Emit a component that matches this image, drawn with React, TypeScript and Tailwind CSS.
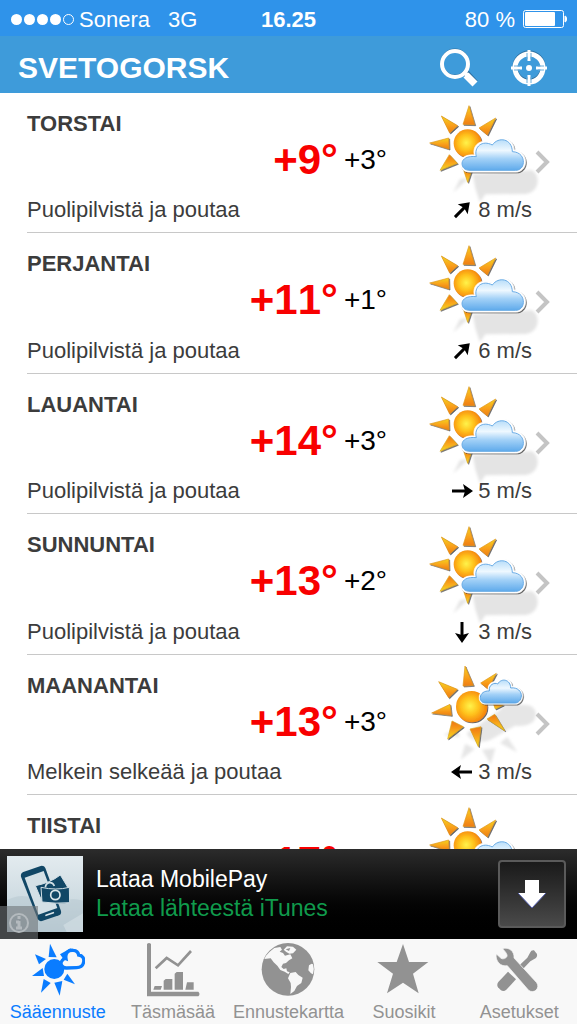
import { useState } from "react"
import type { ReactNode } from "react"

type Sky = "partly" | "mostlyClear"

const forecast = [
  { day: "TORSTAI", high: "+9°", low: "+3°", text: "Puolipilvistä ja poutaa", wind: 8, angle: -45, sky: "partly" as Sky },
  { day: "PERJANTAI", high: "+11°", low: "+1°", text: "Puolipilvistä ja poutaa", wind: 6, angle: -45, sky: "partly" as Sky },
  { day: "LAUANTAI", high: "+14°", low: "+3°", text: "Puolipilvistä ja poutaa", wind: 5, angle: 0, sky: "partly" as Sky },
  { day: "SUNNUNTAI", high: "+13°", low: "+2°", text: "Puolipilvistä ja poutaa", wind: 3, angle: 90, sky: "partly" as Sky },
  { day: "MAANANTAI", high: "+13°", low: "+3°", text: "Melkein selkeää ja poutaa", wind: 3, angle: 180, sky: "mostlyClear" as Sky },
  { day: "TIISTAI", high: "+17°", low: "+4°", text: "Puolipilvistä ja poutaa", wind: 3, angle: 0, sky: "partly" as Sky },
]

// Gradients shared by all weather drawings
function WeatherDefs() {
  return (
    <svg className="absolute h-0 w-0" aria-hidden="true">
      <defs>
        <radialGradient id="sun" cx="45%" cy="48%" r="55%">
          <stop offset="0%" stopColor="#fff34a" />
          <stop offset="50%" stopColor="#ffc21c" />
          <stop offset="100%" stopColor="#f5820c" />
        </radialGradient>
        <linearGradient id="ray" x1="0" y1="0" x2="0" y2="1">
          <stop offset="0%" stopColor="#f4d420" />
          <stop offset="55%" stopColor="#f9a01b" />
          <stop offset="100%" stopColor="#ee7d12" />
        </linearGradient>
        <linearGradient id="rayUp" x1="0" y1="1" x2="0" y2="0">
          <stop offset="0%" stopColor="#f2dc22" />
          <stop offset="45%" stopColor="#f9a81b" />
          <stop offset="100%" stopColor="#ee7412" />
        </linearGradient>
        <linearGradient id="cloud" x1="0" y1="0" x2="0" y2="1">
          <stop offset="0%" stopColor="#b9def9" />
          <stop offset="35%" stopColor="#eef8ff" />
          <stop offset="62%" stopColor="#a3d1f7" />
          <stop offset="100%" stopColor="#5eaaeb" />
        </linearGradient>
        <filter id="drop" x="-20%" y="-20%" width="150%" height="150%">
          <feDropShadow dx="3" dy="3" stdDeviation="2" floodColor="#333" floodOpacity="0.75" />
        </filter>
        <filter id="soft" x="-20%" y="-20%" width="140%" height="140%">
          <feGaussianBlur stdDeviation="4" />
        </filter>
      </defs>
    </svg>
  )
}

function PartlyCloudy() {
  return (
    <svg viewBox="84 45 312 216" className="h-[72px] w-[104px] overflow-visible" aria-hidden="true">
      <g fill="#e4e4e4" filter="url(#soft)">
        <path d="M218 238 L395 226 C422 240 420 290 378 297 L256 298 L240 322 L226 280Z" />
        <path d="M160 292 L180 252 L206 250Z" />
      </g>
      <g filter="url(#drop)">
        <g fill="url(#ray)" stroke="#e0961a" strokeWidth="2">
          <path d="M207 32 L189 88 L224 89Z" />
          <path d="M124 63 L149 114 L173 92Z" />
          <path d="M287 69 L237 99 L262 120Z" />
          <path d="M89 144 L146 129 L147 162Z" />
        </g>
        <g fill="url(#rayUp)" stroke="#d9a81c" strokeWidth="2">
          <path d="M120 226 L148 179 L172 205Z" />
          <path d="M203 262 L189 220 L217 220Z" />
        </g>
        <circle cx="203" cy="145" r="42" fill="url(#sun)" />
      </g>
      <g filter="url(#drop)">
        <path d="M210 231 C190 231 180 218 181 204 C182 188 200 177 223 180 C215 150 245 128 276 144 C294 117 341 126 342 165 C367 167 377 186 376 203 C375 220 362 231 348 231Z" fill="#fff" stroke="#fff" strokeWidth="2" />
        <path d="M210 226 C194 226 186 217 186 205 C187 191 202 182 229 185 C221 155 247 134 277 150 C295 124 336 130 337 170 C362 171 371 188 370 203 C369 217 360 226 346 226Z" fill="url(#cloud)" stroke="#68abe6" strokeWidth="3" />
      </g>
    </svg>
  )
}

function MostlyClear() {
  return (
    <svg viewBox="84 51 312 216" className="h-[72px] w-[104px] overflow-visible" aria-hidden="true">
      <g fill="#e6e6e6" filter="url(#soft)">
        <path d="M300 165 C310 145 340 140 365 150 C395 145 415 165 405 190 C400 210 370 215 345 212 L280 250 C250 268 210 260 200 235Z" />
        <path d="M182 314 L196 266 L224 282Z" />
        <path d="M272 328 L246 284 L286 280Z" />
        <path d="M352 292 L300 264 L322 246Z" />
        <path d="M130 240 L170 222 L180 246Z" />
      </g>
      <g filter="url(#drop)">
        <g fill="url(#ray)" stroke="#e0961a" strokeWidth="2">
          <path d="M195 33 L189 93 L220 91Z" />
          <path d="M289 55 L242 84 L264 102Z" />
          <path d="M116 80 L146 128 L172 103Z" />
          <path d="M95 174 L150 148 L154 181Z" />
        </g>
        <g fill="url(#rayUp)" stroke="#d9a81c" strokeWidth="2">
          <path d="M143 252 L156 198 L190 215Z" />
          <path d="M235 275 L210 222 L243 215Z" />
          <path d="M314 227 L261 192 L284 178Z" />
          <path d="M310 150 L286 162 L280 146Z" />
        </g>
        <circle cx="215" cy="155" r="47" fill="url(#sun)" />
      </g>
      <g filter="url(#drop)">
        <path d="M258 148 C243 148 236 137 237 126 C238 112 250 103 264 104 C261 84 283 76 291 81 C304 62 336 68 336 94 C356 92 369 108 368 123 C367 139 357 148 346 148Z" fill="#fff" stroke="#fff" strokeWidth="1" />
        <path d="M258 144 C246 144 240 136 241 127 C242 115 253 107 268 108 C265 89 284 81 293 87 C305 67 332 74 332 99 C353 96 365 110 364 123 C363 136 355 144 345 144Z" fill="url(#cloud)" stroke="#5fa5e2" strokeWidth="3" />
      </g>
    </svg>
  )
}

function WindArrow({ angle }: { angle: number }) {
  return (
    <svg viewBox="0 0 22 22" className="size-[22px]" aria-hidden="true">
      <g transform={`rotate(${angle} 11 11)`}>
        <path d="M1 11 H15" stroke="#000" strokeWidth="3" />
        <path d="M12 4 L22 11 L12 18 L14 11Z" fill="#000" />
      </g>
    </svg>
  )
}

function StatusBar() {
  return (
    <div className="grid h-9 shrink-0 grid-cols-[1fr_auto_1fr] items-center bg-[#2f93ea] px-[10px] pt-0.5 text-[22px] text-white">
      <div className="flex items-center">
        <div className="mr-[5px] flex gap-0.5 pl-px">
          {[1, 2, 3, 4].map((n) => (
            <span key={n} className="size-[11px] rounded-full bg-white" />
          ))}
          <span className="size-[11px] rounded-full border border-white" />
        </div>
        <span>Sonera</span>
        <span className="ml-[18px]">3G</span>
      </div>
      <span className="font-bold">16.25</span>
      <div className="flex items-center justify-end gap-2">
        <span>80 %</span>
        <svg viewBox="0 0 44 18" className="h-[18px] w-11" aria-hidden="true">
          <rect x="0.5" y="0.5" width="40" height="17" rx="2" fill="none" stroke="#fff" />
          <rect x="2" y="2" width="30" height="14" rx="1" fill="#fff" />
          <path d="M42 6 C44 6 44 12 42 12Z" fill="#fff" stroke="#fff" />
        </svg>
      </div>
    </div>
  )
}

function Header() {
  return (
    <header className="flex h-[57px] shrink-0 items-center justify-between bg-[#3e9bda] pt-[6px] pr-[30px] pl-[18px] text-white">
      <h1 className="text-[30px] font-bold">SVETOGORSK</h1>
      <div className="flex items-center gap-8">
        <button type="button" aria-label="Haku">
          <svg viewBox="0 0 38 38" className="size-[38px] overflow-visible" fill="none">
            <g stroke="#2d6f9f" transform="translate(0 -1)">
              <circle cx="14" cy="15" r="13" strokeWidth="3" />
              <path d="M25 25 L34 35" strokeWidth="7" />
            </g>
            <g stroke="#fff">
              <circle cx="14" cy="15" r="13" strokeWidth="4" />
              <path d="M23 23 L27 27" strokeWidth="4" />
              <path d="M25 26 L34 35" strokeWidth="7" />
            </g>
          </svg>
        </button>
        <button type="button" aria-label="Paikanna">
          <svg viewBox="0 0 36 36" className="size-9 overflow-visible" fill="none">
            <circle cx="18" cy="17" r="14" stroke="#2d6f9f" strokeWidth="5" />
            <circle cx="18" cy="18" r="14" stroke="#fff" strokeWidth="5" />
            <path d="M18 0 V11 M18 25 V36 M0 18 H11 M25 18 H36" stroke="#fff" strokeWidth="3" />
            <path d="M16 3 V9 M20 3 V9 M16 27 V33 M20 27 V33 M3 16 H9 M3 20 H9 M27 16 H33 M27 20 H33" stroke="#6aaedb" strokeWidth="1" />
            <circle cx="18" cy="18" r="3" fill="#fff" />
          </svg>
        </button>
      </div>
    </header>
  )
}

function AdBanner() {
  return (
    <aside className="relative flex h-[90px] shrink-0 items-center bg-linear-to-b from-[#2c2c2c] to-black pr-[11px] pl-[7px]">
      <svg viewBox="21 18 228 228" className="size-[76px]" aria-hidden="true">
        <defs>
          <linearGradient id="adSky" x1="0" y1="0" x2="0" y2="1">
            <stop offset="0%" stopColor="#e3ebef" />
            <stop offset="55%" stopColor="#cfdce2" />
            <stop offset="100%" stopColor="#b4c6cf" />
          </linearGradient>
        </defs>
        <rect x="21" y="18" width="228" height="228" fill="url(#adSky)" />
        <path d="M21 150 C70 125 90 145 130 150 S210 142 249 152 V246 H21Z" fill="#b9cad2" opacity="0.6" />
        <path d="M190 225 L249 190 V246 H200Z" fill="#d5e1e6" opacity="0.6" />
        <path d="M70 66 L122 48 Q132 46 136 54 L183 183 Q185 193 177 196 L126 213 Q117 215 113 207 L63 80 Q61 70 70 66Z" fill="#114766" />
        <path d="M74 83 L131 63 L172 174 L115 194Z" fill="#d3e0e6" />
        <path d="M138 196 L160 188" stroke="#dce6ea" strokeWidth="5" strokeLinecap="round" />
        <path d="M106 107 Q150 99 181 75 L201 108 L205 118 L122 145Z" fill="#114766" stroke="#d3e0e6" strokeWidth="3" />
        <path d="M136 112 C138 96 157 92 163 108" fill="none" stroke="#d3e0e6" strokeWidth="5" />
        <path d="M123 112 Q168 122 208 112 L209 158 Q168 162 126 156Z" fill="#114766" stroke="#d3e0e6" strokeWidth="3" />
        <circle cx="166" cy="135" r="14" fill="none" stroke="#dce6ea" strokeWidth="5" />
      </svg>
      <div className="ml-[13px] flex-1 text-[23px] leading-[29px]">
        <p className="text-white">Lataa MobilePay</p>
        <p className="text-[#109b4c]">Lataa lähteestä iTunes</p>
      </div>
      <button
        type="button"
        aria-label="Lataa"
        className="flex size-[68px] items-center justify-center rounded-sm border-2 border-[#5a5a5a] bg-linear-to-b from-[#1a1a1a] to-[#4a4a4a]"
      >
        <svg viewBox="0 0 28 28" className="size-7">
          <path d="M7 0 H21 V13 H28 L14 28 L0 13 H7Z" fill="#fff" />
          <path d="M0 13 L14 28 L28 13" fill="none" stroke="#5560b0" strokeWidth="1" />
        </svg>
      </button>
      <div className="absolute bottom-0 left-0 flex h-[33px] w-[38px] items-center justify-center bg-[#6f7478]/60">
        <svg viewBox="0 0 22 22" className="size-[22px]" fill="none" stroke="#b4babe" aria-hidden="true">
          <circle cx="11" cy="11" r="9" strokeWidth="2" />
          <path d="M11 9 V16 M8 10 H11 M8 16 H14" strokeWidth="3" />
          <path d="M11 4 V7" strokeWidth="3" />
        </svg>
      </div>
    </aside>
  )
}

function Icon({ viewBox, children }: { viewBox: string; children: ReactNode }) {
  return (
    <svg viewBox={viewBox} className="size-[54px]" fill="currentColor" aria-hidden="true">
      {children}
    </svg>
  )
}

const tabs = [
  {
    label: "Sääennuste",
    icon: (
      <Icon viewBox="92 430 162 162">
        <circle cx="162" cy="508" r="30" />
        <path d="M149 432 L145 472 L169 473Z" />
        <path d="M104 464 L116 494 L137 478Z" />
        <path d="M95 529 L127 505 L131 529Z" />
        <path d="M122 579 L130 538 L151 550Z" />
        <path d="M178 588 L162 549 L186 544Z" />
        <path d="M224 554 L190 540 L201 522Z" />
        <path d="M212 445 L179 464 L192 482Z" />
        <path d="M199 505 C183 506 178 490 186 482 C190 476 194 476 197 477 C194 460 204 450 219 452 C230 453 234 460 235 466 C247 467 252 477 250 487 C248 498 240 504 229 504Z" fill="#f8f8f8" stroke="currentColor" strokeWidth="10" />
      </Icon>
    ),
  },
  {
    label: "Täsmäsää",
    icon: (
      <Icon viewBox="438 430 162 162">
        <path d="M441 433 Q447 427 453 433 V576 H595 Q602 583 595 590 H441Z" />
        <path d="M467 506 L500 475 L534 497 L573 454" fill="none" stroke="currentColor" strokeWidth="8" />
        <path d="M464 559 H486 L482 570 H460Z M497 538 H517 V570 H491 V543Z M530 517 H549 V570 H524 V522Z M561 548 H581 V570 H556Z" />
      </Icon>
    ),
  },
  {
    label: "Ennustekartta",
    icon: (
      <Icon viewBox="20 16 162 162">
        <circle cx="101" cy="95" r="79" />
        <g fill="#f8f8f8">
          <path d="M46 42 L60 31 L78 28 L83 36 L76 42 L86 46 L92 54 L108 50 L114 62 L104 68 L95 76 L86 78 L81 88 L88 94 L96 92 L98 101 L106 104 L102 109 L91 102 L78 97 L69 84 L58 74 L49 62 L30 64 L35 54Z" />
          <path d="M88 36 L98 26 L116 27 L126 36 L116 47 L105 48 L96 43Z" />
          <path d="M108 106 L124 103 L132 112 L145 120 L141 136 L128 145 L120 160 L108 169 L110 148 L109 136 L101 122Z" />
          <path d="M172 78 L164 83 L162 98 L170 107 L176 110 Q181 94 176 80Z" />
        </g>
        <path d="M94 35 L108 31 L104 40Z" />
      </Icon>
    ),
  },
  {
    label: "Suosikit",
    icon: (
      <Icon viewBox="261 430 162 162">
        <path d="M339 433 L357 487 H415 L369 522 L386 581 L339 549 L291 581 L309 522 L262 487 H320Z" />
      </Icon>
    ),
  },
  {
    label: "Asetukset",
    icon: (
      <Icon viewBox="607 430 162 162">
        <path d="M722 458 Q724 451 733 452 L742 463 Q744 470 739 475 L722 485 L702 506 L691 495 L713 474Z" />
        <path d="M655 516 L679 539 L650 570 Q642 577 633 571 L625 563 Q620 556 626 547Z" />
        <path d="M639 447 C657 441 675 455 673 475 L741 549 C752 565 734 584 717 572 L653 498 C633 502 616 484 620 463 L634 476 C640 480 650 476 652 470 C654 464 647 456 639 447Z" stroke="#f8f8f8" strokeWidth="2" />
      </Icon>
    ),
  },
]

export default function App() {
  const [active, setActive] = useState("Sääennuste")

  return (
    <div className="flex h-screen flex-col bg-white font-['Liberation_Sans',Arial,sans-serif]">
      <WeatherDefs />
      <StatusBar />
      <Header />

      <main className="min-h-0 flex-1 overflow-y-auto [scrollbar-width:none]">
        <ul>
          {forecast.map((item) => (
            <li key={item.day} className="ml-[27px] h-[140px] border-b border-[#c8c8c8] even:h-[141px]">
              <a
                href={`#${item.day.toLowerCase()}`}
                className="grid h-full grid-cols-[1fr_145px_45px] grid-rows-[28px_44px_1fr] pt-[17px] pb-2 text-[22px] leading-7 text-[#3c3c3c]"
              >
                <h2 className="font-bold">{item.day}</h2>
                <div className="col-start-1 row-start-2 flex items-center justify-end gap-1.5 [font-kerning:none]">
                  <span className="text-[42px] font-bold text-[#f80000]">{item.high}</span>
                  <span className="text-[28px] text-black">{item.low}</span>
                </div>
                <p className="col-start-1 row-start-3 self-end">{item.text}</p>
                <div className="col-start-2 row-span-2 row-start-1 justify-self-end">
                  {item.sky === "partly" ? <PartlyCloudy /> : <MostlyClear />}
                </div>
                <p className="col-start-2 row-start-3 flex items-center gap-[5px] self-end justify-self-end">
                  <WindArrow angle={item.angle} />
                  <span>{item.wind} m/s</span>
                </p>
                <svg
                  viewBox="0 0 16 24"
                  className="col-start-3 row-start-2 mt-1 ml-[3px] h-6 w-4 self-center"
                  fill="none"
                  stroke="#c4c4c4"
                  strokeWidth="4"
                  aria-hidden="true"
                >
                  <path d="M2 2 L12 12 L2 22" />
                </svg>
              </a>
            </li>
          ))}
        </ul>
      </main>

      <AdBanner />

      <nav className="grid shrink-0 grid-cols-5 bg-[#f8f8f8] pt-1">
        {tabs.map((tab) => (
          <button
            key={tab.label}
            type="button"
            onClick={() => setActive(tab.label)}
            className={`flex flex-col items-center gap-1 text-lg leading-[23px] ${active === tab.label ? "text-[#0a7cff]" : "text-[#929292]"}`}
          >
            {tab.icon}
            <span>{tab.label}</span>
          </button>
        ))}
      </nav>
    </div>
  )
}
